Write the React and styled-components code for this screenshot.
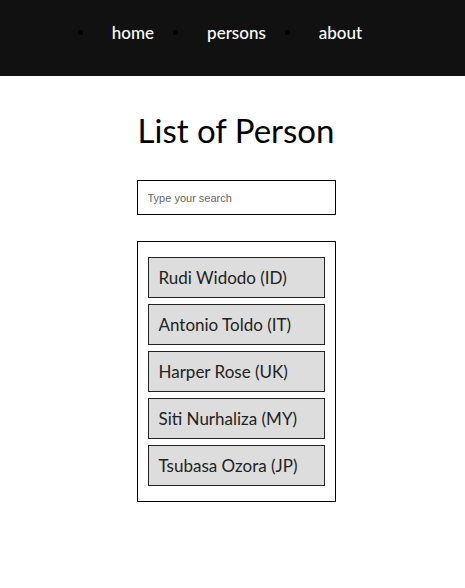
import React, { useState } from 'react';
import styled, { createGlobalStyle } from 'styled-components';

const GlobalStyle = createGlobalStyle`
  body {
    margin: 0;
    background: #fff;
    font-family: "Lato", "Open Sans", sans-serif;
  }
`

const Nav = styled.nav`
  background-color: #111;
  height: 76px;
  display: flex;
  justify-content: center;
  padding-top: 21px;
  padding-right: 25px;
  box-sizing: border-box;
`
const NavList = styled.ul`
  display: flex;
  gap: 19px;
  margin: 0;
  padding: 0;
  list-style: none;
  height: 22px;
`
const NavItem = styled.li`
  display: flex;
  align-items: center;
  gap: 29px;
  color: #fff;
  font-size: 17px;
  font-weight: 500;

  &::before {
    content: '';
    width: 5px;
    height: 5px;
    border-radius: 50%;
    background: #000;
  }
`

const Main = styled.main`
  display: flex;
  flex-direction: column;
  align-items: center;
  padding-left: 7px;
`
const Title = styled.h1`
  font-size: 33px;
  font-weight: 400;
  margin: 34px 0 30px;
  color: #000;
`
const Search = styled.input`
  width: 199px;
  height: 35px;
  box-sizing: border-box;
  border: 1px solid #000;
  padding: 0 10px;
  font-family: "Liberation Sans", Arial, sans-serif;
  font-size: 11px;
  outline: none;

  &::placeholder {
    color: #666;
  }
`
const ListBox = styled.div`
  width: 199px;
  box-sizing: border-box;
  border: 1px solid #000;
  margin-top: 26px;
  padding: 15px 10px;
  display: flex;
  flex-direction: column;
  gap: 6px;
`
const Person = styled.div`
  height: 41px;
  box-sizing: border-box;
  background-color: #ddd;
  border: 1px solid #222;
  display: flex;
  align-items: center;
  padding-left: 10px;
  font-size: 17px;
  color: #222;
`

const people = [
  'Rudi Widodo (ID)',
  'Antonio Toldo (IT)',
  'Harper Rose (UK)',
  'Siti Nurhaliza (MY)',
  'Tsubasa Ozora (JP)',
]

const App = () => {
  const [query, setQuery] = useState('')
  const shown = people.filter(p => p.toLowerCase().includes(query.toLowerCase()))

  return (
    <>
      <GlobalStyle />
      <Nav>
        <NavList>
          <NavItem>home</NavItem>
          <NavItem>persons</NavItem>
          <NavItem>about</NavItem>
        </NavList>
      </Nav>
      <Main>
        <Title>List of Person</Title>
        <Search
          placeholder="Type your search"
          value={query}
          onChange={e => setQuery(e.target.value)}
        />
        <ListBox>
          {shown.map(p => (
            <Person key={p}>{p}</Person>
          ))}
        </ListBox>
      </Main>
    </>
  )
}

export default App;
